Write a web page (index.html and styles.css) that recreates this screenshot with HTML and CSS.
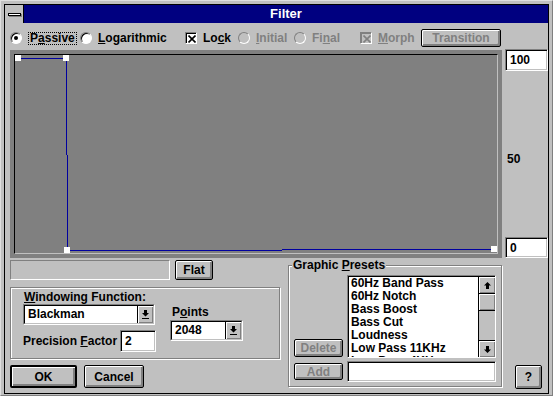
FILE: index.html
```html
<!DOCTYPE html>
<html>
<head>
<meta charset="utf-8">
<title>Filter</title>
<link rel="stylesheet" href="styles.css">
</head>
<body>
<div class="window">
  <div class="frame">
    <div class="titlebar">
      <div class="sysmenu"><span class="sysbar"></span></div>
      <div class="caption">Filter</div>
    </div>
    <div class="client">
      <div class="toolbar">
        <div class="opt o-passive"><span class="radio on"></span><span class="focus">P<u>a</u>ssive</span></div>
        <div class="opt o-log"><span class="radio"></span><span><u>L</u>ogarithmic</span></div>
        <div class="opt o-lock"><span class="check"><svg width="8" height="8" viewBox="0 0 8 8"><path d="M0.5 0.5L7.5 7.5M7.5 0.5L0.5 7.5" stroke="#000" stroke-width="1.6"/></svg></span><span>Lo<u>c</u>k</span></div>
        <div class="opt o-init dis"><span class="radio"></span><span><u>I</u>nitial</span></div>
        <div class="opt o-final dis"><span class="radio"></span><span>Fi<u>n</u>al</span></div>
        <div class="opt o-morph dis"><span class="check"><svg width="8" height="8" viewBox="0 0 8 8"><path d="M0.5 0.5L7.5 7.5M7.5 0.5L0.5 7.5" stroke="#808080" stroke-width="1.6"/></svg></span><span><u>M</u>orph</span></div>
        <div class="btn dis b-trans">Transition</div>
      </div>

      <div class="graphrow">
        <div class="plot">
          <div class="plot-in">
            <svg class="curve" width="482" height="198" viewBox="15 55 482 198">
              <g stroke="#0000a0" stroke-width="1" fill="none">
                <path d="M21 58.5H63"/>
                <path d="M66.5 61V155"/>
                <path d="M67.5 155V247"/>
                <path d="M70 250.5H282"/>
                <path d="M282 249.5H491"/>
              </g>
              <g fill="#fff">
                <rect x="15" y="55" width="6" height="6"/>
                <rect x="63" y="55" width="6" height="6"/>
                <rect x="64" y="247" width="6" height="6"/>
                <rect x="491" y="246" width="6" height="6"/>
              </g>
            </svg>
          </div>
        </div>
        <div class="scale">
          <div class="edit e-top">100</div>
          <div class="mid">50</div>
          <div class="edit e-bot">0</div>
        </div>
      </div>

      <div class="bottom">
        <div class="leftcol">
          <div class="statusrow">
            <div class="status"></div>
            <div class="btn b-flat">Flat</div>
          </div>
          <div class="group g-win">
            <div class="sub s-win">
              <div class="lbl l-win"><u>W</u>indowing Function:</div>
              <div class="combo c-black">
                <div class="combo-in">
                  <span class="ctext">Blackman</span>
                  <span class="cbtn"><svg width="7" height="9" viewBox="0 0 7 9"><path d="M2 0H5V3H7L3.5 6.5L0 3H2Z M0 8H7V9H0Z" fill="#000"/></svg></span>
                </div>
              </div>
              <div class="prow">
                <span class="lbl">Precision <u>F</u>actor</span>
                <div class="edit e-prec">2</div>
              </div>
            </div>
            <div class="sub s-pts">
              <div class="lbl l-pts">P<u>o</u>ints</div>
              <div class="combo c-pts">
                <div class="combo-in">
                  <span class="ctext">2048</span>
                  <span class="cbtn"><svg width="7" height="9" viewBox="0 0 7 9"><path d="M2 0H5V3H7L3.5 6.5L0 3H2Z M0 8H7V9H0Z" fill="#000"/></svg></span>
                </div>
              </div>
            </div>
          </div>
          <div class="btnrow">
            <div class="btn default b-ok">OK</div>
            <div class="btn b-cancel">Cancel</div>
          </div>
        </div>

        <div class="presets">
          <span class="legend">Graphic <u>P</u>resets</span>
          <div class="pgrid">
            <div class="btn dis b-del">Delete</div>
            <div class="list">
              <div class="items">
                <div class="item">60Hz Band Pass</div>
                <div class="item">60Hz Notch</div>
                <div class="item">Bass Boost</div>
                <div class="item">Bass Cut</div>
                <div class="item">Loudness</div>
                <div class="item">Low Pass 11KHz</div>
                <div class="item">Low Pass 4KHz</div>
              </div>
              <div class="vscroll">
                <div class="sbtn sb-up"><svg width="7" height="7" viewBox="0 0 7 7"><path d="M3.5 0L7 3.5H5V7H2V3.5H0Z" fill="#000"/></svg></div>
                <div class="thumb"></div>
                <div class="track"></div>
                <div class="sbtn sb-down"><svg width="7" height="7" viewBox="0 0 7 7"><path d="M3.5 7L7 3.5H5V0H2V3.5H0Z" fill="#000"/></svg></div>
              </div>
            </div>
            <div class="btn dis b-add">Add</div>
            <div class="edit e-add"></div>
          </div>
        </div>

        <div class="btn b-help">?</div>
      </div>
    </div>
  </div>
</div>
</body>
</html>
```

FILE: styles.css
```css
* {
  box-sizing: border-box;
  margin: 0;
  padding: 0;
}

html, body {
  width: 553px;
  height: 396px;
  overflow: hidden;
  background: #c0c0c0;
}

body {
  font-family: "Liberation Sans", Arial, sans-serif;
  font-weight: bold;
  font-size: 12px;
  color: #000;
}

u {
  text-decoration: underline;
  text-underline-offset: 1px;
}

.window {
  width: 553px;
  height: 396px;
  border: 1px solid;
  border-color: #dfdfdf #808080 #808080 #dfdfdf;
  padding: 3px 3px 1px 3px;
  background: #c0c0c0;
}

.frame {
  height: 100%;
  border: 1px solid #000;
  display: flex;
  flex-direction: column;
}

/* title bar */
.titlebar {
  height: 18px;
  display: flex;
  flex: none;
}

.sysmenu {
  width: 19px;
  background: #c0c0c0;
  border-right: 1px solid #000;
  display: flex;
  align-items: center;
  justify-content: center;
}

.sysbar {
  width: 13px;
  height: 3px;
  background: #fff;
  border: 1px solid #000;
  box-shadow: 1px 1px 0 #808080;
}

.caption {
  flex: 1;
  background: #000080;
  color: #fff;
  font-size: 13px;
  line-height: 18px;
  text-align: center;
}

/* client */
.client {
  flex: 1;
  display: flex;
  flex-direction: column;
}

.toolbar {
  display: flex;
  align-items: center;
  height: 18px;
  margin-top: 6px;
  padding-left: 5px;
}

.opt {
  display: flex;
  align-items: center;
  gap: 6px;
  height: 18px;
  flex: none;
}

.o-passive { width: 70px; }
.o-log { width: 105px; }
.o-lock { width: 53px; }
.o-init { width: 56px; }
.o-final { width: 66px; }
.o-morph { width: 61px; }

.dis { color: #808080; }

.radio {
  width: 12px;
  height: 12px;
  border-radius: 50%;
  border: 1px solid;
  border-color: #808080 #fff #fff #808080;
  box-shadow: inset 1px 1px 0 #000;
  background: #fff;
  display: flex;
  align-items: center;
  justify-content: center;
  flex: none;
  margin-top: -1px;
}

.radio.on::after {
  content: "";
  width: 4px;
  height: 4px;
  border-radius: 50%;
  background: #000;
}

.dis .radio {
  background: #c0c0c0;
  box-shadow: none;
}

.check {
  width: 12px;
  height: 12px;
  border: 1px solid;
  border-color: #808080 #fff #fff #808080;
  box-shadow: inset 1px 1px 0 #000;
  background: #fff;
  display: flex;
  align-items: center;
  justify-content: center;
  flex: none;
  padding: 1px 0 0 1px;
}

.dis .check {
  background: #c0c0c0;
  box-shadow: inset 1px 1px 0 #808080;
}

.focus {
  border: 1px dotted #000;
  padding: 0 1px;
  line-height: 11px;
}

/* buttons */
.btn {
  display: flex;
  align-items: center;
  justify-content: center;
  border: 1px solid #000;
  border-radius: 2px;
  background: #c0c0c0;
  box-shadow: inset 1px 1px 0 #fff, inset -1px -1px 0 #808080, inset -2px -2px 0 #808080;
  flex: none;
}

.btn.default {
  border-width: 2px;
}

.b-trans {
  width: 80px;
  height: 18px;
}

/* graph */
.graphrow {
  display: flex;
  margin-top: 2px;
  padding-left: 5px;
  height: 209px;
}

.plot {
  width: 492px;
  height: 208px;
  margin-top: 1px;
  background: #808080;
  padding: 4px;
}

.plot-in {
  width: 484px;
  height: 200px;
  border: 1px solid;
  border-color: #000 #c0c0c0 #c0c0c0 #000;
  background: #808080;
}

.curve {
  display: block;
}

.scale {
  width: 43px;
  margin-left: 3px;
  display: flex;
  flex-direction: column;
}

.edit {
  border: 1px solid;
  border-color: #808080 #fff #fff #808080;
  box-shadow: inset 1px 1px 0 #000, inset -1px -1px 0 #c0c0c0;
  background: #fff;
  display: flex;
  align-items: center;
  padding-left: 4px;
  flex: none;
}

.e-top {
  height: 22px;
}

.e-bot {
  height: 21px;
  margin-top: auto;
}

.mid {
  margin-top: 81px;
  line-height: 14px;
  padding-left: 2px;
}

/* bottom area */
.bottom {
  display: flex;
  padding-left: 5px;
  flex: 1;
}

.leftcol {
  width: 270px;
  display: flex;
  flex-direction: column;
}

.statusrow {
  display: flex;
  margin-top: 2px;
  height: 20px;
}

.status {
  width: 160px;
  border: 1px solid;
  border-color: #808080 #fff #fff #808080;
}

.b-flat {
  width: 38px;
  margin-left: 5px;
}

.group {
  border: 1px solid #808080;
  box-shadow: inset 1px 1px 0 #fff, 1px 1px 0 #fff;
}

.g-win {
  margin-top: 7px;
  height: 72px;
  display: flex;
}

.sub {
  display: flex;
  flex-direction: column;
}

.s-win {
  margin-left: 12px;
  width: 133px;
}

.lbl {
  line-height: 14px;
  white-space: nowrap;
}

.l-win {
  margin-top: 2px;
  padding-left: 1px;
}

.combo {
  height: 21px;
  border: 1px solid;
  border-color: #808080 #fff #fff #808080;
}

.combo-in {
  height: 100%;
  display: flex;
  border: 1px solid;
  border-color: #000 #c0c0c0 #c0c0c0 #000;
  background: #fff;
}

.ctext {
  flex: 1;
  padding-left: 3px;
  line-height: 17px;
}

.cbtn {
  width: 16px;
  background: #c0c0c0;
  border-left: 1px solid #000;
  box-shadow: inset 1px 1px 0 #fff, inset -1px -1px 0 #808080;
  display: flex;
  align-items: center;
  justify-content: center;
}

.c-black {
  width: 132px;
}

.prow {
  display: flex;
  align-items: center;
  justify-content: space-between;
  margin-top: 5px;
  height: 22px;
}

.e-prec {
  width: 36px;
  height: 22px;
}

.s-pts {
  margin-left: 14px;
  width: 73px;
}

.l-pts {
  margin-top: 17px;
  padding-left: 2px;
}

.c-pts {
  width: 73px;
  margin-top: 1px;
}

.btnrow {
  display: flex;
  margin-top: 6px;
  height: 23px;
}

.b-ok {
  width: 67px;
}

.b-cancel {
  width: 60px;
  margin-left: 7px;
}

/* presets */
.presets {
  position: relative;
  width: 214px;
  height: 122px;
  margin-left: 8px;
  margin-top: 7px;
  border: 1px solid #808080;
  box-shadow: inset 1px 1px 0 #fff, 1px 1px 0 #fff;
}

.legend {
  position: absolute;
  top: -8px;
  left: 3px;
  padding: 0 1px;
  line-height: 14px;
  background: #c0c0c0;
}

.pgrid {
  display: grid;
  grid-template-columns: 49px 149px;
  grid-template-rows: 83px 21px;
  column-gap: 4px;
  row-gap: 3px;
  padding: 9px 0 0 5px;
}

.b-del {
  align-self: end;
  height: 18px;
  margin-bottom: 1px;
}

.b-add {
  align-self: center;
  height: 17px;
}

.list {
  display: flex;
  border: 1px solid;
  border-color: #808080 #fff #fff #808080;
  box-shadow: inset 1px 1px 0 #000;
  background: #fff;
  padding: 1px 0 0 1px;
  overflow: hidden;
}

.items {
  flex: 1;
  padding-left: 2px;
  overflow: hidden;
}

.item {
  line-height: 13px;
  white-space: nowrap;
}

.vscroll {
  width: 17px;
  border-left: 1px solid #000;
  display: flex;
  flex-direction: column;
  background: #c0c0c0;
}

.sbtn {
  height: 16px;
  display: flex;
  align-items: center;
  justify-content: center;
  box-shadow: inset 1px 1px 0 #fff, inset -1px -1px 0 #808080;
  flex: none;
}

.sb-up {
  border-bottom: 1px solid #000;
  height: 17px;
}

.thumb {
  height: 17px;
  border-bottom: 1px solid #000;
  box-shadow: inset 1px 1px 0 #fff, inset -1px -1px 0 #808080;
  flex: none;
}

.track {
  flex: 1;
}

.sb-down {
  border-top: 1px solid #000;
  height: 17px;
}

.e-add {
  width: 149px;
  height: 21px;
}

.b-help {
  width: 27px;
  height: 24px;
  margin-left: 13px;
  margin-top: 107px;
}
```
